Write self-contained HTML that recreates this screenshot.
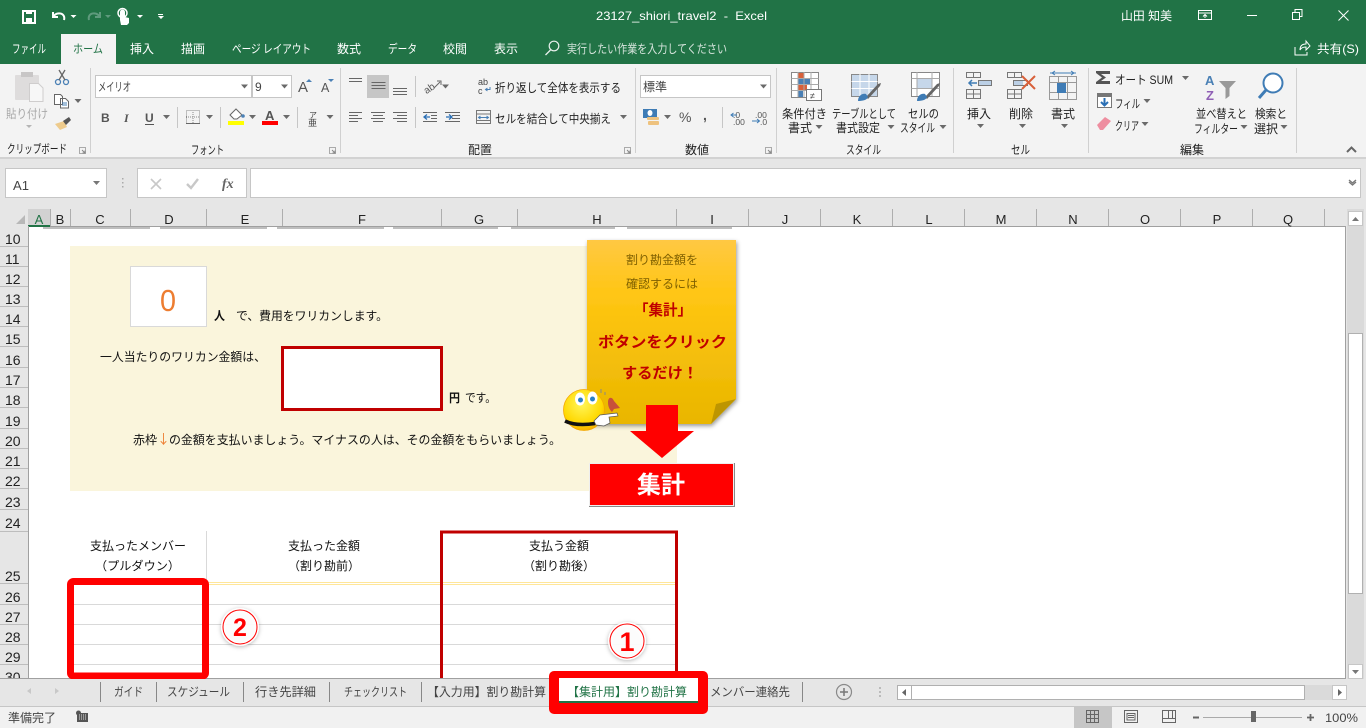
<!DOCTYPE html>
<html lang="ja"><head><meta charset="utf-8"><title>23127_shiori_travel2 - Excel</title>
<style>
html,body{margin:0;padding:0;width:1366px;height:728px;overflow:hidden;background:#e6e6e6}
svg{display:block;position:absolute;left:0;top:0}
text{font-family:"Liberation Sans","Noto Sans CJK JP",sans-serif;font-size:12px;fill:#262626;white-space:pre}
.w{fill:#fff}.g{fill:#444}.d{fill:#222}.h{font-size:13px;fill:#222;text-anchor:middle}.r{font-size:14px;fill:#222}.c{fill:#111}.t{fill:#444}
.l{stroke:#7a7a7a;fill:none}.bl{stroke:#4a80b5;fill:none}
</style></head><body>
<svg width="1366" height="728" viewBox="0 0 1366 728" xmlns="http://www.w3.org/2000/svg">
<defs>
<linearGradient id="note" x1="0" y1="0" x2="0" y2="1"><stop offset="0" stop-color="#ffc843"/><stop offset=".3" stop-color="#ffc613"/><stop offset="1" stop-color="#e9b600"/></linearGradient>
<radialGradient id="sm" cx=".45" cy=".35" r=".7"><stop offset="0" stop-color="#fff65a"/><stop offset=".7" stop-color="#ffd800"/><stop offset="1" stop-color="#f5a400"/></radialGradient>
<filter id="sh" x="-20%" y="-20%" width="140%" height="140%"><feDropShadow dx="1" dy="2" stdDeviation="2" flood-color="#000" flood-opacity=".4"/></filter>
<filter id="cs" x="-30%" y="-30%" width="160%" height="160%"><feDropShadow dx="0" dy="1" stdDeviation="2" flood-color="#000" flood-opacity=".3"/></filter>
<path id="ar" d="M-3.5-2h7L0 2z" fill="#6a6a6a"/>
</defs>

<!-- Title bar -->
<rect width="1366" height="64" fill="#217346"/>
<rect x="61" y="34" width="55" height="30" fill="#f3f3f3"/>
<g fill="none" stroke="#fff" stroke-width="2">
<rect x="23" y="11" width="12" height="12"/>
</g>
<rect x="26" y="10" width="6" height="4" fill="#fff"/><rect x="26" y="18" width="6" height="5" fill="#fff"/>
<path d="M53 12v5h5M53.500 16.500C57 11 66 13 64 20" fill="none" stroke="#fff" stroke-width="2"/>
<path d="M70.500 15h6l-3 3z" fill="#fff"/>
<path d="M100 12v5h-5M99.500 16.500C96 11 87 13 89 20" fill="none" stroke="#5f9a7d" stroke-width="2"/>
<path d="M105 15h6l-3 3z" fill="#5f9a7d"/>
<path d="M120 20v-8a2.500 2.500 0 015 0v5l4 1v5l-2 2h-6z" fill="#fff"/><circle cx="122.500" cy="13" r="4.500" fill="none" stroke="#fff" stroke-width="1.500"/>
<path d="M137 15h6l-3 3z" fill="#fff"/>
<path d="M158 14h5v1h-5zM158 16h6l-3 3z" fill="#fff"/>
<text x="596" y="20" class="w" textLength="171" lengthAdjust="spacingAndGlyphs">23127_shiori_travel2  -  Excel</text>
<text x="1121" y="20" class="w" textLength="51" lengthAdjust="spacingAndGlyphs">山田 知美</text>
<path d="M1198.500 10.500h13v9h-13zM1198.500 13h13M1205 18v-3M1203 16.500l2-2 2 2" fill="none" stroke="#fff"/>
<path d="M1247 15.500h10" stroke="#fff"/>
<path d="M1292.500 12.500h7v7h-7zM1295 12v-2.500h7v7h-2.500" fill="none" stroke="#fff"/>
<path d="M1338.500 10.500l10 10M1348.500 10.500l-10 10" stroke="#fff"/>
<g class="tabs">
<text x="12" y="53" class="w" textLength="34" lengthAdjust="spacingAndGlyphs">ファイル</text>
<text x="73" y="53" style="fill:#217346" textLength="30" lengthAdjust="spacingAndGlyphs">ホーム</text>
<text x="130" y="53" class="w">挿入</text><text x="181" y="53" class="w">描画</text>
<text x="232" y="53" class="w" textLength="79" lengthAdjust="spacingAndGlyphs">ページ レイアウト</text>
<text x="337" y="53" class="w">数式</text>
<text x="388" y="53" class="w" textLength="29" lengthAdjust="spacingAndGlyphs">データ</text>
<text x="443" y="53" class="w">校閲</text><text x="494" y="53" class="w">表示</text>
<text x="567" y="53" style="fill:#d7e5dd" textLength="160" lengthAdjust="spacingAndGlyphs">実行したい作業を入力してください</text>
<text x="1317" y="53" class="w" textLength="42" lengthAdjust="spacingAndGlyphs">共有(S)</text>
</g>
<circle cx="554" cy="46" r="4.800" fill="none" stroke="#e8f0ec" stroke-width="1.200"/><path d="M550.500 50l-5 5" stroke="#e8f0ec" stroke-width="1.300"/>
<path d="M1295 47v8h12v-3M1300 50c0-4 2-6 6-6v-3l4 5-4 4v-3c-3 0-5 1-6 3z" fill="none" stroke="#fff"/>

<!-- Ribbon -->
<rect y="64" width="1366" height="93" fill="#f3f3f3"/>
<rect y="157" width="1366" height="2" fill="#d2d2d2"/>
<rect y="159" width="1366" height="50" fill="#e6e6e6"/>
<g stroke="#d0d0d0">
<path d="M90.500 68v85M340.500 68v85M635.500 68v85M776.500 68v85M953.500 68v85M1088.500 68v85M1296.500 68v85"/>
<path d="M177.500 107v21M220.500 107v21M297.500 107v21M415.500 76v21M415.500 107v21M722.500 107v21" stroke="#c6c6c6"/>
</g>
<!-- clipboard -->
<rect x="15" y="75" width="24" height="25" rx="1" fill="#dedcdc"/><rect x="21" y="72" width="12" height="5" fill="#c8c6c6"/>
<path d="M29.500 83.500h9l4.500 4.500v13.500h-13.500z" fill="#f7f7f7" stroke="#cfcdcd"/>
<text x="6" y="118" style="fill:#a8a8a8" textLength="42" lengthAdjust="spacingAndGlyphs">貼り付け</text>
<path d="M26 125h6l-3 3z" fill="#b5b5b5"/>
<circle cx="58" cy="82" r="2.500" fill="none" stroke="#4a80b5" stroke-width="1.300"/><circle cx="66" cy="82" r="2.500" fill="none" stroke="#4a80b5" stroke-width="1.300"/><path d="M59 80l6-10M65 80L59 70" stroke="#666" stroke-width="1.300"/>
<path d="M54.500 94.500h6l2 2v8h-8zM60.500 98.500h5l3 3v6.500h-8z" fill="#fff" stroke="#666"/><path d="M62 103h5M62 105h5" stroke="#4a80b5"/>
<use href="#ar" x="78" y="101"/>
<path d="M55 124l9-3 3 6-7 3z" fill="#eecb8c"/><path d="M63 121l6-4 2 3-5 5z" fill="#555"/>
<text x="7" y="153" class="d" textLength="60" lengthAdjust="spacingAndGlyphs">クリップボード</text>
<g id="lau" fill="none" stroke="#888"><path d="M79.500 147.500h6v6h-6z" stroke="#aaa"/><path d="M82 150l3 3M85 150.500v2.500h-2.500"/></g>
<use href="#lau" x="250"/><use href="#lau" x="545"/><use href="#lau" x="686"/>
<!-- font -->
<rect x="95.500" y="75.500" width="156" height="22" fill="#fff" stroke="#c6c6c6"/>
<rect x="252.500" y="75.500" width="39" height="22" fill="#fff" stroke="#c6c6c6"/>
<text x="98" y="91" class="g" textLength="33" lengthAdjust="spacingAndGlyphs">メイリオ</text><text x="255" y="91" class="g">9</text>
<use href="#ar" x="244.500" y="86.500"/><use href="#ar" x="284.500" y="86.500"/>
<text x="298" y="92" style="font-size:15px;fill:#555">A</text><path d="M306 82l3-3 3 3z" fill="#4a80b5"/>
<text x="321" y="92" style="font-size:12.500px;fill:#555">A</text><path d="M328 79h6l-3 3z" fill="#4a80b5"/>
<text x="101" y="122" style="font-weight:bold;font-size:12px;fill:#555">B</text>
<text x="124" y="122" style="font-style:italic;font-weight:bold;font-size:12px;fill:#555;font-family:'Liberation Serif',serif">I</text>
<text x="145" y="122" style="font-weight:bold;font-size:12px;fill:#555">U</text><path d="M145 124.500h9" stroke="#555"/>
<use href="#ar" x="166.500" y="117"/>
<path d="M186.500 110.500h13v13h-13zM193 110v13M186 117h13" fill="none" stroke="#888" stroke-dasharray="1 1"/><path d="M186 123.500h14" stroke="#666"/>
<use href="#ar" x="209.500" y="117"/>
<path d="M230 115l6-6 6 6-5 4h-3z" fill="#fff" stroke="#666"/><circle cx="243" cy="116" r="1.800" fill="#4a80b5"/>
<rect x="228" y="121" width="16" height="4" fill="#ff0"/><use href="#ar" x="252.500" y="117"/>
<text x="265" y="120" style="font-weight:bold;font-size:13px;fill:#555">A</text><rect x="262" y="121" width="16" height="4" fill="#f00"/><use href="#ar" x="286.500" y="117"/>
<text x="309" y="118" style="font-size:8px;fill:#444">ア</text><text x="308" y="126" style="font-size:9px;fill:#444">亜</text><use href="#ar" x="330" y="117"/>
<text x="191" y="154" class="d" textLength="33" lengthAdjust="spacingAndGlyphs">フォント</text>
<!-- align -->
<rect x="367" y="75" width="22" height="23" fill="#c6c6c6"/>
<g stroke="#666" fill="none">
<path d="M349 78.500h13M349 81.500h13M371.500 82.500h14M371.500 85.500h14M371.500 88.500h14M393 88.500h14M393 91.500h14M393 94.500h14"/>
<path d="M349 112.500h13M349 115.500h9M349 118.500h13M349 121.500h9M371 112.500h14M373 115.500h10M371 118.500h14M373 121.500h10M393 112.500h14M397 115.500h10M393 118.500h14M397 121.500h10"/>
<path d="M431 115.500h6M431 118.500h6M423 112.500h14M423 121.500h14M445 112.500h15M452 115.500h8M452 118.500h8M445 121.500h15"/>
</g>
<path d="M424 117h6M427 114.500l-3 2.500 3 2.500M446 117h6M449 114.500l3 2.500-3 2.500" fill="none" stroke="#2a6fb5" stroke-width="1.300"/>
<text x="423" y="91" style="font-size:10px;fill:#555" transform="rotate(-35 430 87)">ab</text><path d="M434 88l6-6M437 81h4v4" stroke="#666" fill="none"/>
<use href="#ar" x="445.500" y="86.500"/>
<text x="478" y="85" style="font-size:9px;fill:#444">ab</text><text x="478" y="94" style="font-size:9px;fill:#444">c</text><path d="M490 87v2.500h-4M487.500 88l-2 1.500 2 1.500" stroke="#4a80b5" fill="none"/>
<text x="495" y="92" class="d" textLength="126" lengthAdjust="spacingAndGlyphs">折り返して全体を表示する</text>
<path d="M476.500 110.500h14v13h-14zM476.500 114h14M476.500 120.500h14" fill="none" stroke="#777"/><path d="M479 117.500h9M480.500 116l-2 1.500 2 1.500M486.500 116l2 1.500-2 1.500" stroke="#4a80b5" fill="none"/>
<text x="495" y="123" class="d" textLength="116" lengthAdjust="spacingAndGlyphs">セルを結合して中央揃え</text>
<use href="#ar" x="623.500" y="117"/>
<text x="468" y="154" class="d">配置</text>
<!-- number -->
<rect x="640.500" y="75.500" width="130" height="22" fill="#fff" stroke="#c6c6c6"/>
<text x="643" y="91" class="g">標準</text><use href="#ar" x="763.500" y="86.500"/>
<rect x="643" y="109" width="14" height="9" fill="#3f7cb5"/><ellipse cx="650" cy="113" rx="2.500" ry="3" fill="#fff"/><rect x="647" y="117" width="12" height="3" rx="1" fill="#eec27e"/><rect x="648" y="121" width="11" height="4" rx="1" fill="#eec27e"/>
<use href="#ar" x="667.500" y="117"/>
<text x="679" y="122" style="font-size:14px;fill:#555">%</text><text x="703" y="120" style="font-size:14px;font-weight:bold;fill:#555">,</text>
<text x="733" y="118" style="font-size:8.500px;fill:#555">.0</text><text x="733" y="125" style="font-size:8.500px;fill:#555">.00</text><path d="M731 115h6M733.500 113l-2.500 2 2.500 2" stroke="#3f7cb5" fill="none"/>
<text x="755" y="118" style="font-size:8.500px;fill:#555">.00</text><text x="760" y="125" style="font-size:8.500px;fill:#555">.0</text><path d="M752 121h7M757 119l2.500 2-2.500 2" stroke="#3f7cb5" fill="none"/>
<text x="685" y="154" class="d">数値</text>
<!-- styles -->
<path d="M791.500 72.500h27v25h-27z" fill="#fff" stroke="#888"/>
<rect x="798" y="73" width="6" height="5" fill="#d8603a"/><rect x="798" y="79" width="12" height="5" fill="#4a80b5"/><rect x="798" y="85" width="9" height="5" fill="#d8603a"/><rect x="798" y="91" width="5" height="6" fill="#4a80b5"/>
<path d="M791.500 78.500h27M791.500 84.500h27M791.500 90.500h27M798 72v25M804 72v25M811 72v25" stroke="#aaa" fill="none"/>
<rect x="806.500" y="89.500" width="15" height="11" fill="#fff" stroke="#777"/><text x="810" y="99" style="font-size:9px;fill:#444">≠</text>
<text x="782" y="118" class="d" textLength="45" lengthAdjust="spacingAndGlyphs">条件付き</text><text x="788" y="132" class="d" textLength="24" lengthAdjust="spacingAndGlyphs">書式</text><use href="#ar" x="819" y="127"/>
<path d="M851.500 74.500h26v22h-26z" fill="#c6d7ea" stroke="#888"/><path d="M851.500 81.500h26M851.500 88.500h26M860 74v22M869 74v22" stroke="#fff" fill="none"/>
<path d="M866 97l12-13 3-1-1 3-12 13z" fill="#666"/><path d="M858 101c0-5 4-8 8-7l2 3c-1 3-5 4-10 4z" fill="#3f7cb5"/>
<text x="832" y="118" class="d" textLength="64" lengthAdjust="spacingAndGlyphs">テーブルとして</text><text x="836" y="132" class="d" textLength="44" lengthAdjust="spacingAndGlyphs">書式設定</text><use href="#ar" x="891" y="127"/>
<path d="M911.500 72.500h28v24h-28z" fill="#fff" stroke="#888"/><rect x="917" y="79" width="15" height="9" fill="#c6d7ea"/><path d="M911.500 78.500h28M911.500 88.500h28M917 72v24M932 72v24" stroke="#aaa" fill="none"/>
<path d="M925 97l12-13 3-1-1 3-12 13z" fill="#666"/><path d="M917 101c0-5 4-8 8-7l2 3c-1 3-5 4-10 4z" fill="#3f7cb5"/>
<text x="908" y="118" class="d" textLength="31" lengthAdjust="spacingAndGlyphs">セルの</text><text x="900" y="132" class="d" textLength="35" lengthAdjust="spacingAndGlyphs">スタイル</text><use href="#ar" x="943" y="127"/>
<text x="846" y="154" class="d" textLength="35" lengthAdjust="spacingAndGlyphs">スタイル</text>
<!-- cells -->
<g fill="none" stroke="#777">
<path d="M966.500 72.500h14v5h-14zM973.500 72v5M966.500 89.500h14v9h-14zM973.500 89v9M966.500 94h14M978.500 80.500h13v5h-13zM985 80v5"/>
<path d="M1007.500 72.500h14v5h-14zM1014.500 72v5M1007.500 89.500h14v9h-14zM1014.500 89v9M1007.500 94h14M1013.500 80.500h14v5h-14z"/>
<path d="M1049.500 76.500h27v23h-27zM1049.500 82.500h27M1058.500 77v22M1067.500 77v22M1049.500 92.500h27" stroke="#999"/>
</g>
<rect x="979" y="81" width="12" height="4" fill="#bcd0e6"/><path d="M977 83h-8M972 80l-3 3 3 3" fill="none" stroke="#3f7cb5" stroke-width="1.500"/>
<rect x="1014" y="81" width="9" height="4" fill="#bcd0e6"/><path d="M1022 76l13 13M1035 76l-13 13" stroke="#d8603a" stroke-width="2"/>
<rect x="1057" y="83" width="9" height="10" fill="#3f7cb5"/><path d="M1050 73h26M1052 73l3-2M1052 73l3 2M1074 73l-3-2M1074 73l-3 2" stroke="#3f7cb5" fill="none"/>
<text x="967" y="118" class="d">挿入</text><use href="#ar" x="980.500" y="126"/>
<text x="1009" y="118" class="d">削除</text><use href="#ar" x="1022.500" y="126"/>
<text x="1051" y="118" class="d">書式</text><use href="#ar" x="1064.500" y="126"/>
<text x="1011" y="154" class="d" textLength="19" lengthAdjust="spacingAndGlyphs">セル</text>
<!-- edit -->
<path d="M1096 71h14v3h-9l5 3.500-5 3.500h9v3h-14v-2l6-4.500-6-4.500z" fill="#555"/>
<text x="1115" y="84" class="d" textLength="58" lengthAdjust="spacingAndGlyphs">オート SUM</text><use href="#ar" x="1185.500" y="78"/>
<rect x="1097.500" y="93.500" width="14" height="14" fill="#fff" stroke="#777"/><rect x="1098" y="94" width="13" height="3" fill="#777"/><path d="M1104.500 98v7M1101 102l3.500 3.500 3.500-3.500" fill="none" stroke="#2a6fb5" stroke-width="2"/>
<text x="1115" y="108" class="d" textLength="25" lengthAdjust="spacingAndGlyphs">フィル</text><use href="#ar" x="1147" y="101"/>
<path d="M1097 125l8-8 6 4-8 9h-3z" fill="#ee8ea0"/>
<text x="1115" y="130" class="d" textLength="24" lengthAdjust="spacingAndGlyphs">クリア</text><use href="#ar" x="1145" y="124"/>
<text x="1205" y="85" style="font-size:13px;font-weight:bold;fill:#4a80b5">A</text><text x="1206" y="100" style="font-size:13px;font-weight:bold;fill:#8f5fb5">Z</text>
<path d="M1219 81h17l-6.500 7v8l-4 3v-11z" fill="#999"/>
<text x="1196" y="118" class="d" textLength="51" lengthAdjust="spacingAndGlyphs">並べ替えと</text><text x="1194" y="133" class="d" textLength="44" lengthAdjust="spacingAndGlyphs">フィルター</text><use href="#ar" x="1244" y="127"/>
<circle cx="1273" cy="83" r="9.500" fill="#fff" stroke="#3f7cb5" stroke-width="2"/><path d="M1266 90l-7 8" stroke="#3f7cb5" stroke-width="3"/>
<text x="1255" y="118" class="d" textLength="32" lengthAdjust="spacingAndGlyphs">検索と</text><text x="1254" y="133" class="d" textLength="24" lengthAdjust="spacingAndGlyphs">選択</text><use href="#ar" x="1284" y="127"/>
<text x="1180" y="154" class="d">編集</text>
<path d="M1347 152l4.500-4.500 4.500 4.500" fill="none" stroke="#666" stroke-width="2"/>

<!-- Formula bar -->
<rect x="5.500" y="168.500" width="101" height="29" fill="#fff" stroke="#c6c6c6"/>
<text x="13" y="190" style="font-size:13px;fill:#444" textLength="16" lengthAdjust="spacingAndGlyphs">A1</text>
<path d="M93 181h7l-3.500 4z" fill="#777"/>
<path d="M122 178h1.500v1.500H122zM122 182h1.500v1.500H122zM122 186h1.500v1.500H122z" fill="#aaa"/>
<rect x="137.500" y="168.500" width="109" height="29" fill="#fff" stroke="#c6c6c6"/>
<path d="M151 179l10 10M161 179l-10 10" stroke="#c8c8c8" stroke-width="1.600"/>
<path d="M187 184l4 4 7-9" fill="none" stroke="#c8c8c8" stroke-width="2.400"/>
<text x="222" y="188" style="font-family:'Liberation Serif',serif;font-style:italic;font-weight:bold;font-size:14px;fill:#666">fx</text>
<rect x="250.500" y="168.500" width="1110" height="29" fill="#fff" stroke="#c6c6c6"/>
<path d="M1349 182l3.500 3 3.500-3M1349 180l3.500 3 3.500-3" fill="none" stroke="#777" stroke-width="1.400"/>

<!-- Sheet -->
<rect x="29" y="226" width="1316" height="452" fill="#fff"/>
<rect x="28" y="209" width="22" height="17" fill="#d2d2d2"/><rect x="28" y="225" width="22" height="2" fill="#217346"/>
<path d="M16 224l9-9v9z" fill="#b8b8b8"/>
<path d="M50 226.500H1345M28.500 226v452M1345.500 226v453M28 678.500h1318" stroke="#a0a0a0" fill="none"/>
<g stroke="#aeaeae"><path d="M50.500 209v17M70.500 209v17M130.500 209v17M206.500 209v17M282.500 209v17M441.500 209v17M517.500 209v17M676.500 209v17M748.500 209v17M820.500 209v17M892.500 209v17M964.500 209v17M1036.500 209v17M1108.500 209v17M1180.500 209v17M1252.500 209v17M1324.500 209v17"/></g>
<text x="39" y="224" class="h" style="fill:#217346">A</text><text x="60" y="224" class="h">B</text><text x="100" y="224" class="h">C</text><text x="169" y="224" class="h">D</text><text x="245" y="224" class="h">E</text><text x="362" y="224" class="h">F</text><text x="479" y="224" class="h">G</text><text x="597" y="224" class="h">H</text><text x="712" y="224" class="h">I</text><text x="785" y="224" class="h">J</text><text x="857" y="224" class="h">K</text><text x="929" y="224" class="h">L</text><text x="1001" y="224" class="h">M</text><text x="1073" y="224" class="h">N</text><text x="1145" y="224" class="h">O</text><text x="1217" y="224" class="h">P</text><text x="1288" y="224" class="h">Q</text>
<g stroke="#a8a8a8" stroke-width="1.500"><path d="M43 228h107M160 228h107M277 228h107M393 228h105M511 228h104M627 228h105"/></g>
<!-- row header -->
<g stroke="#bdbdbd"><path d="M0 246.500h28M0 266.500h28M0 286.500h28M0 306.500h28M0 326.500h28M0 346.500h28M0 367.500h28M0 387.500h28M0 407.500h28M0 428.500h28M0 448.500h28M0 468.500h28M0 488.500h28M0 509.500h28M0 531.500h28M0 583.500h28M0 604.500h28M0 624.500h28M0 644.500h28M0 664.500h28"/></g>
<g>
<text x="5" y="244" class="r">10</text><text x="5" y="264" class="r">11</text><text x="5" y="284" class="r">12</text><text x="5" y="304" class="r">13</text><text x="5" y="324" class="r">14</text><text x="5" y="344" class="r">15</text><text x="5" y="365" class="r">16</text><text x="5" y="385" class="r">17</text><text x="5" y="405" class="r">18</text><text x="5" y="426" class="r">19</text><text x="5" y="446" class="r">20</text><text x="5" y="466" class="r">21</text><text x="5" y="486" class="r">22</text><text x="5" y="507" class="r">23</text><text x="5" y="528" class="r">24</text><text x="5" y="581" class="r">25</text><text x="5" y="602" class="r">26</text><text x="5" y="622" class="r">27</text><text x="5" y="642" class="r">28</text><text x="5" y="662" class="r">29</text><text x="5" y="682" class="r">30</text>
</g>

<!-- Beige panel -->
<rect x="70" y="246" width="607" height="245" fill="#faf5dc"/>
<rect x="130.500" y="266.500" width="76" height="60" fill="#fff" stroke="#d9d9d9"/>
<text x="160" y="311" style="font-size:31px;fill:#ed7d31" textLength="16" lengthAdjust="spacingAndGlyphs">0</text>
<text x="214" y="320" class="c" style="font-weight:bold" textLength="11" lengthAdjust="spacingAndGlyphs">人</text>
<text x="236" y="320" class="c" textLength="152" lengthAdjust="spacingAndGlyphs">で、費用をワリカンします。</text>
<text x="100" y="361" class="c" textLength="166" lengthAdjust="spacingAndGlyphs">一人当たりのワリカン金額は、</text>
<rect x="282.500" y="347.500" width="159" height="62" fill="#fff" stroke="#c00000" stroke-width="3"/>
<text x="449" y="402" class="c" style="font-weight:bold" textLength="11" lengthAdjust="spacingAndGlyphs">円</text>
<text x="465" y="402" class="c" textLength="31" lengthAdjust="spacingAndGlyphs">です。</text>
<text x="133" y="444" class="c">赤枠</text>
<text x="157" y="444" style="fill:#ed7d31;font-family:'Noto Sans CJK JP',sans-serif;font-size:13px">↓</text>
<text x="169" y="444" class="c" textLength="392" lengthAdjust="spacingAndGlyphs">の金額を支払いましょう。マイナスの人は、その金額をもらいましょう。</text>

<!-- Note -->
<path d="M587 240h149v159l-25 25H587z" fill="url(#note)" filter="url(#sh)"/>
<path d="M736 399l-25 25 5-20z" fill="#bd9500"/>
<text x="626" y="264" style="fill:#7f6000" textLength="72" lengthAdjust="spacingAndGlyphs">割り勘金額を</text>
<text x="626" y="288" style="fill:#7f6000" textLength="72" lengthAdjust="spacingAndGlyphs">確認するには</text>
<text x="634" y="315" style="fill:#c00000;font-weight:bold;font-size:15px" textLength="58" lengthAdjust="spacingAndGlyphs">「集計」</text>
<text x="598" y="347" style="fill:#c00000;font-weight:bold;font-size:15px" textLength="129" lengthAdjust="spacingAndGlyphs">ボタンをクリック</text>
<text x="622" y="378" style="fill:#c00000;font-weight:bold;font-size:15px" textLength="76" lengthAdjust="spacingAndGlyphs">するだけ！</text>
<!-- Arrow -->
<path d="M646 405h32v26h16l-32 27-32-27h16z" fill="#f00"/>
<!-- Button -->
<rect x="589" y="463" width="146" height="44" fill="#888"/><rect x="589" y="463" width="145" height="43" fill="#eee"/><rect x="590" y="464" width="143" height="41" fill="#f00"/>
<text x="637" y="493" style="fill:#fff;font-weight:bold;font-size:24px" textLength="48" lengthAdjust="spacingAndGlyphs">集計</text>
<!-- Smiley -->
<circle cx="584" cy="410" r="20.500" fill="url(#sm)" stroke="#f3a800" stroke-width=".8"/>
<ellipse cx="580" cy="399" rx="5" ry="6.500" fill="#fff"/><ellipse cx="592.500" cy="398" rx="5" ry="6.500" fill="#fff"/><circle cx="580.500" cy="400" r="2.500" fill="#2a80c5"/><circle cx="592.500" cy="399" r="2.500" fill="#2a80c5"/>
<path d="M565 421c8 4 20 4 30 2.500" fill="none" stroke="#111" stroke-width="3.500"/>
<path d="M594 421l6-6 17-2 1 3-9 1 1 6-6 3-8-1z" fill="#fff" stroke="#555" stroke-width=".7"/>
<path d="M608 402c0-5 4-6 6-1l6 7-6 1-2 3c-3-3-4-6-4-10z" fill="#c8503a"/>
<path d="M601 389v4M605 392v3" stroke="#888"/>

<!-- Table -->
<path d="M206.500 531v52" stroke="#d9d9d9"/>
<text x="90" y="550" class="c" textLength="96" lengthAdjust="spacingAndGlyphs">支払ったメンバー</text>
<text x="95" y="570" class="c" textLength="85" lengthAdjust="spacingAndGlyphs">（プルダウン）</text>
<text x="288" y="550" class="c" textLength="72" lengthAdjust="spacingAndGlyphs">支払った金額</text>
<text x="288" y="570" class="c" textLength="72" lengthAdjust="spacingAndGlyphs">（割り勘前）</text>
<text x="529" y="550" class="c" textLength="60" lengthAdjust="spacingAndGlyphs">支払う金額</text>
<text x="523" y="570" class="c" textLength="72" lengthAdjust="spacingAndGlyphs">（割り勘後）</text>
<path d="M70 582.500h606M70 584.500h606" stroke="#ffe699"/>
<path d="M70 604.500h606M70 624.500h606M70 644.500h606M70 664.500h606" stroke="#d9d9d9"/>
<path d="M441.500 678V532h235v146" fill="none" stroke="#c00000" stroke-width="3"/>
<rect x="70.500" y="581.500" width="135" height="94.500" rx="3" fill="none" stroke="#f00" stroke-width="7"/>
<circle cx="240" cy="627" r="19" fill="#fff" fill-opacity=".92" filter="url(#cs)"/><circle cx="240" cy="627" r="17" fill="none" stroke="#f00" stroke-width="1"/>
<text x="240" y="636" style="fill:#f00;font-weight:bold;font-size:25px;text-anchor:middle">2</text>
<circle cx="627" cy="641" r="19" fill="#fff" fill-opacity=".92" filter="url(#cs)"/><circle cx="627" cy="641" r="17" fill="none" stroke="#f00" stroke-width="1"/>
<text x="627" y="651" style="fill:#f00;font-weight:bold;font-size:27px;text-anchor:middle">1</text>

<!-- V scrollbar -->
<rect x="1347" y="209" width="17" height="470" fill="#dadada"/>
<rect x="1348.500" y="211.500" width="14" height="14" fill="#fff" stroke="#c6c6c6"/><path d="M1352 221l3.500-4 3.500 4z" fill="#777"/>
<rect x="1348.500" y="333.500" width="14" height="260" fill="#fff" stroke="#b0b0b0"/>
<rect x="1348.500" y="664.500" width="14" height="14" fill="#fff" stroke="#c6c6c6"/><path d="M1352 670h7l-3.500 4z" fill="#777"/>

<!-- Sheet tabs -->
<rect y="679" width="1366" height="27" fill="#e6e6e6"/>
<path d="M0 678.500h28" stroke="#a0a0a0"/>
<path d="M31 688v6l-4-3zM55 688v6l4-3z" fill="#c8c8c8"/>
<g stroke="#888"><path d="M100.500 682v20M156.500 682v20M243.500 682v20M329.500 682v20M421.500 682v20M802.500 682v20"/></g>
<text x="114" y="696" class="t" textLength="29" lengthAdjust="spacingAndGlyphs">ガイド</text>
<text x="167" y="696" class="t" textLength="63" lengthAdjust="spacingAndGlyphs">スケジュール</text>
<text x="255" y="696" class="t" textLength="61" lengthAdjust="spacingAndGlyphs">行き先詳細</text>
<text x="344" y="696" class="t" textLength="63" lengthAdjust="spacingAndGlyphs">チェックリスト</text>
<text x="427" y="696" class="t" textLength="119" lengthAdjust="spacingAndGlyphs">【入力用】割り勘計算</text>
<text x="710" y="696" class="t" textLength="80" lengthAdjust="spacingAndGlyphs">メンバー連絡先</text>
<circle cx="844" cy="692" r="7.500" fill="none" stroke="#8a8a8a" stroke-width="1.200"/><path d="M840 692h8M844 688v8" stroke="#777" stroke-width="1.500"/>
<path d="M879 687h2v2h-2zM879 691h2v2h-2zM879 695h2v2h-2z" fill="#bbb"/>
<rect x="897" y="685" width="450" height="15" fill="#dadada"/>
<rect x="897.500" y="685.500" width="14" height="14" fill="#fff" stroke="#b0b0b0"/><path d="M906 689v7l-4-3.500z" fill="#666"/>
<rect x="911.500" y="685.500" width="393" height="14" fill="#fff" stroke="#b0b0b0"/>
<rect x="1332.500" y="685.500" width="14" height="14" fill="#fff" stroke="#c6c6c6"/><path d="M1338 689v7l4-3.500z" fill="#666"/>

<!-- Status bar -->
<rect y="706" width="1366" height="22" fill="#f1f1f1"/><path d="M0 706.500h1366" stroke="#c6c6c6"/>
<text x="8" y="722" class="g" textLength="48" lengthAdjust="spacingAndGlyphs">準備完了</text>
<rect x="77" y="713" width="11" height="9" fill="#555"/><circle cx="78.500" cy="713" r="2.500" fill="#555"/><path d="M79 715h8M79 717h8M79 719h8" stroke="#ddd" stroke-dasharray="1 1"/>
<rect x="1074" y="707" width="38" height="21" fill="#c6c6c6"/>
<g fill="none" stroke="#666"><path d="M1086.500 710.500h12v12h-12zM1090.500 710v12M1094.500 710v12M1086 714.500h12M1086 718.500h12"/>
<path d="M1124.500 710.500h13v12h-13zM1127 713.500h8v6.500h-8zM1128 715.500h6M1128 717.500h6"/>
<path d="M1162.500 710.500h13v12h-13zM1162 718.500h13M1168.500 710v8M1172.500 710v8"/></g>
<path d="M1193 717.500h6" stroke="#666" stroke-width="2"/>
<path d="M1203 717.500h99" stroke="#aaa"/><rect x="1251" y="711" width="5" height="11" fill="#666"/>
<path d="M1307 717.500h7M1310.500 714v7" stroke="#666" stroke-width="1.800"/>
<text x="1325" y="722" class="g" textLength="33" lengthAdjust="spacingAndGlyphs">100%</text>

<!-- Active tab and highlight -->
<rect x="559" y="678" width="139" height="24" fill="#fff"/><rect x="559" y="701" width="139" height="2" fill="#217346"/>
<text x="567" y="696" style="fill:#217346" textLength="120" lengthAdjust="spacingAndGlyphs">【集計用】割り勘計算</text>
<path fill-rule="evenodd" fill="#f00" d="M554 671h149a5 5 0 015 5v33a5 5 0 01-5 5H554a5 5 0 01-5-5v-33a5 5 0 015-5zM559 678v25h139v-25z"/>
</svg>
</body></html>
